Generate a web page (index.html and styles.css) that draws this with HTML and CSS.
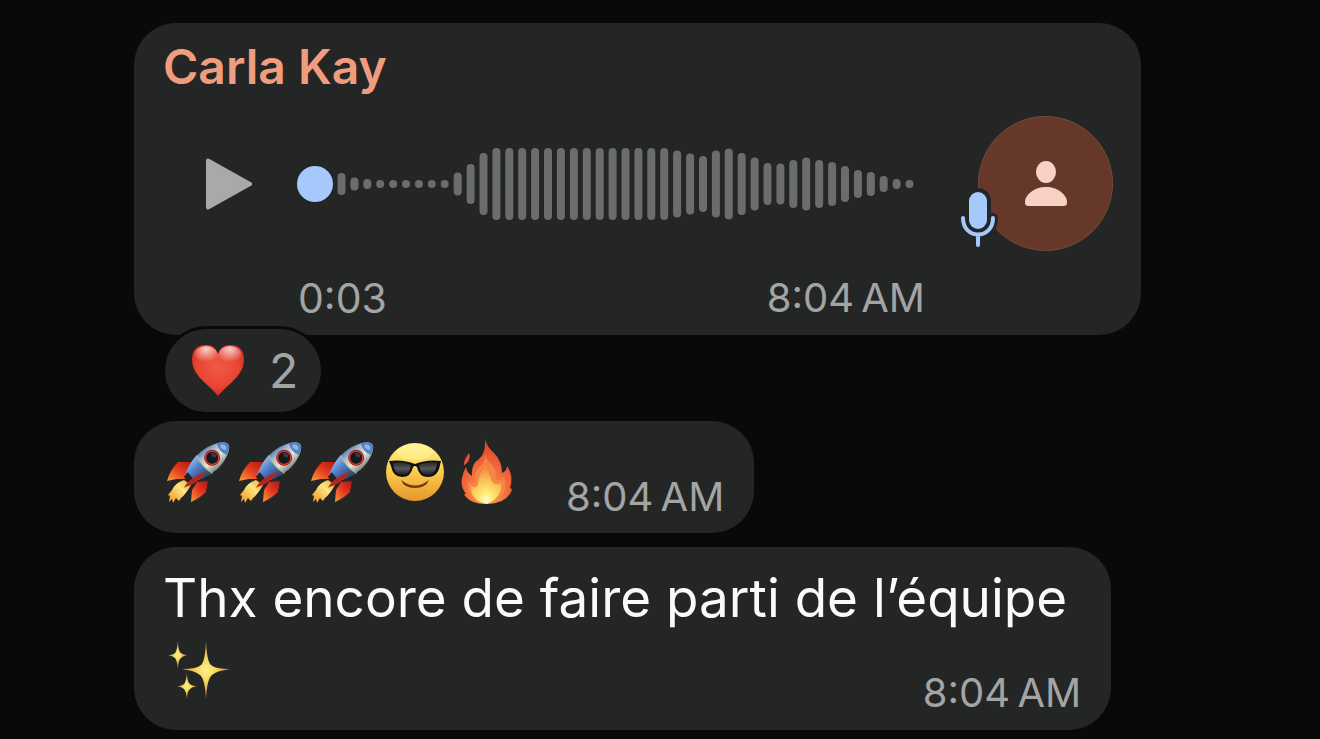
FILE: index.html
```html
<!DOCTYPE html>
<html lang="fr">
<head>
<meta charset="utf-8">
<meta name="viewport" content="width=device-width, initial-scale=1">
<title>Carla Kay</title>
<link rel="stylesheet" href="styles.css">
</head>
<body>
<svg class="defs" aria-hidden="true">
  <defs>
    <linearGradient id="hull" x1="0" y1="0" x2="1" y2="0">
      <stop offset="0" stop-color="#5f86b8"/><stop offset=".25" stop-color="#a9b9c9"/><stop offset=".6" stop-color="#e4e6e4"/><stop offset="1" stop-color="#858985"/>
    </linearGradient>
    <linearGradient id="skirt" x1="0" y1="0" x2="1" y2="0">
      <stop offset="0" stop-color="#8db5ea"/><stop offset=".4" stop-color="#4e7fc8"/><stop offset="1" stop-color="#243e68"/>
    </linearGradient>
    <linearGradient id="fin" x1="1" y1="0" x2="0" y2="1">
      <stop offset="0" stop-color="#a5180f"/><stop offset=".5" stop-color="#e63a22"/><stop offset="1" stop-color="#f5a03a"/>
    </linearGradient>
    <linearGradient id="exhaust" x1="1" y1="0" x2="0" y2="1">
      <stop offset="0" stop-color="#e8a42c"/><stop offset=".4" stop-color="#ffe680"/><stop offset="1" stop-color="#e9901c"/>
    </linearGradient>
    <linearGradient id="face" x1="0" y1="0" x2="0" y2="1">
      <stop offset="0" stop-color="#fff184"/><stop offset=".5" stop-color="#fbcc4b"/><stop offset="1" stop-color="#e6962b"/>
    </linearGradient>
    <linearGradient id="lens" x1="0" y1="0" x2="0" y2="1">
      <stop offset="0" stop-color="#26282a"/><stop offset=".5" stop-color="#55585a"/><stop offset="1" stop-color="#1b1b1b"/>
    </linearGradient>
    <radialGradient id="blaze" cx=".5" cy=".86" r=".8">
      <stop offset="0" stop-color="#fbb04a"/><stop offset=".45" stop-color="#f4743c"/><stop offset="1" stop-color="#e1432f"/>
    </radialGradient>
    <radialGradient id="core" cx=".5" cy=".9" r=".8">
      <stop offset="0" stop-color="#fffde0"/><stop offset=".25" stop-color="#ffec78"/><stop offset=".65" stop-color="#fcc257"/><stop offset="1" stop-color="#f59246"/>
    </radialGradient>
    <radialGradient id="gold">
      <stop offset="0" stop-color="#fff08a"/><stop offset=".35" stop-color="#f8da5c"/><stop offset="1" stop-color="#c98a4d"/>
    </radialGradient>
    <radialGradient id="love" cx=".5" cy=".42" r=".62">
      <stop offset="0" stop-color="#ee5a46"/><stop offset=".65" stop-color="#ea4533"/><stop offset="1" stop-color="#c9261c"/>
    </radialGradient>
    <radialGradient id="shine" cx=".5" cy=".15" r=".65">
      <stop offset="0" stop-color="#fff" stop-opacity=".75"/><stop offset="1" stop-color="#fff" stop-opacity="0"/>
    </radialGradient>
    <symbol id="rocket" viewBox="0 0 64 64">
      <path d="M29 22L12 22Q4 30 1 41L11 39 21 39z" fill="url(#fin)"/>
      <path d="M42 41L40 52Q34 58 25 62L26 50 31 42z" fill="url(#fin)"/>
      <path d="M18 40L25 45Q20 54 15 58L13 61 10 58 7 63 6 59 3 62 4 56 2 55 6 50Q9 43 18 40z" fill="url(#exhaust)"/>
      <g transform="translate(62 4) rotate(49)">
        <path d="M0 0Q4 0 8 8 12 17 12 26 11 40 5 52L-5 52Q-12 40-12 26-12 17-8 8-4 0 0 0z" fill="url(#hull)"/>
        <path d="M-12 31Q0 35 12 31 10 42 5 52L-5 52Q-11 42-12 31z" fill="url(#skirt)"/>
        <path d="M0 0Q4 0 8 8 0 12-8 8-4 0 0 0z" fill="#5284c4"/>
        <path d="M-4 5Q0 1 3 5 3 7-3 8z" fill="#8fb8e2"/>
        <path d="M-12 31Q0 35 12 31" fill="none" stroke="#c4bd72"/>
        <path d="M-5 49H5L4 55H-4z" fill="#1f2427"/>
        <path d="M6 35Q11 47 4 62 0 50 6 35z" fill="#b8261b"/>
        <circle cy="21" r="8" fill="#a91d19"/><circle cy="21" r="7" fill="#d8493d"/><circle cy="21" r="6" fill="#15191d"/>
        <ellipse cx="-1" cy="18" rx="3" ry="2" fill="#353b40"/>
      </g>
    </symbol>
    <symbol id="cool" viewBox="0 0 60 60">
      <circle cx="30" cy="30" r="29" fill="url(#face)"/>
      <ellipse cx="30" cy="10" rx="18" ry="8" fill="#fff8a8" opacity=".5"/>
      <path d="M16 38Q30 49 44 38 41 46 30 46 19 46 16 38z" fill="#6a3b12"/>
      <path d="M4 19Q18 17 30 22 42 17 56 19L55 23Q53 35 43 35 34 35 32 25 30 23 28 25 26 35 17 35 8 35 6 24z" fill="#111"/>
      <path d="M8 21Q18 19 26 23 25 33 17 33 9 33 8 21zM34 23Q43 19 52 21 51 33 43 33 35 33 34 23z" fill="url(#lens)"/>
    </symbol>
    <symbol id="fire" viewBox="0 0 52 66">
      <path d="M24 0Q26 8 33 14 41 22 41 34 46 32 46 27 53 37 49 49 52 50 50 53 44 65 26 65 8 65 3 55L5 55Q-1 47 1 39 2 33 5 28 6 34 11 37 10 25 18 20 25 14 24 0z" fill="url(#blaze)"/>
      <path d="M8 14Q10 19 6 24 2 27 3 27 2 22 8 14z" fill="#ea5036"/>
      <path d="M24 14Q25 22 32 27 36 32 35 41 42 42 43 37 47 53 37 60 26 67 14 60 5 54 7 42 10 45 14 44 13 34 18 28 25 23 24 14z" fill="#f58a48" opacity=".8"/>
      <path d="M25 27Q29 37 31 43 35 47 40 44 42 58 26 65 9 62 10 47 15 50 17 46 17 36 25 27z" fill="url(#core)"/>
    </symbol>
    <symbol id="sparkles" viewBox="0 0 62 62">
      <path d="M38 0Q39 21 43 24 47 28 62 28 48 30 44 34 39 38 38 58 37 38 32 34 28 30 14 28 29 28 33 24 37 21 38 0z" fill="url(#gold)"/>
      <path d="M10 0Q10 10 13 12 15 14 19 14 15 15 13 17 10 19 10 28 9 19 7 17 5 15 0 14 5 14 7 12 9 10 10 0z" fill="url(#gold)"/>
      <path d="M19 32Q19 41 22 43 24 45 29 45 24 46 22 48 19 50 19 58 18 50 16 48 14 46 9 45 14 45 16 43 18 41 19 32z" fill="url(#gold)"/>
    </symbol>
    <symbol id="heart" viewBox="0 0 52 52">
      <path d="M26 51Q22 46 12 37 0 26 0 15 0 0 14 0 23 0 26 9 29 0 38 0 52 0 52 15 52 26 40 37 30 46 26 51z" fill="url(#love)"/>
      <ellipse cx="14" cy="11" rx="12" ry="10" fill="url(#shine)"/><ellipse cx="38" cy="11" rx="12" ry="10" fill="url(#shine)"/>
    </symbol>
  </defs>
</svg>

<main class="chat">
  <article class="bubble voice">
    <h1 class="sender">Carla Kay</h1>
    <div class="player">
      <button class="play" type="button" aria-label="Play">
        <svg width="46" height="52" viewBox="0 0 46 52"><path d="M2 2.500L44 26 2 49.500z" fill="#a9a9a9" stroke="#a9a9a9" stroke-width="4" stroke-linejoin="round"/></svg>
      </button>
      <div class="track">
        <svg class="wave" viewBox="0 0 618 72" aria-hidden="true">
          <path class="bars" d="M44.500 29V43M57.400 33.500V38.500M70.300 35V37M83.200 36V36.100M96.100 36V36.100M109 36V36.100M121.900 36V36.100M134.800 36V36.100M147.700 36V36.100M160.700 28.500V43.500M173.600 20V52M186.500 9V63M199.400 4V68M212.300 4V68M225.200 4V68M238.100 4V68M251 4V68M263.900 4V68M276.900 4V68M289.800 4V68M302.700 4V68M315.600 4V68M328.500 4V68M341.400 4V68M354.300 4V68M367.200 4V68M380.100 6.500V65.500M393.100 9.500V62.500M406 12V60M418.900 6.500V65.500M431.800 4.500V67.500M444.700 9V63M457.600 13.500V58.500M470.500 19V53M483.400 19.500V52.500M496.300 16V56M509.200 13.500V58.500M522.200 16V56M535.100 18V54M548 22V50M560.900 26V46M573.800 28V44M586.700 32V40M599.600 35V37M612.500 36V36.100"/>
        </svg>
        <input class="seek" type="range" min="0" max="3" value="0" step="0.1" aria-label="Position">
      </div>
      <div class="avatar">
        <svg class="person" width="42" height="46" viewBox="0 0 42 46"><ellipse cx="21" cy="11" rx="10" ry="11"/><path d="M0 41C0 34 9 26 21 26S42 34 42 41C42 44 41 45 38 45H4C1 45 0 44 0 41z"/></svg>
        <svg class="mic" width="42" height="66" viewBox="0 0 42 66">
          <g fill="none" stroke-linecap="round"><path d="M21 14V29" stroke="#242626" stroke-width="26"/><path d="M6 31C6 53 36 53 36 31M21 48V58" stroke="#242626" stroke-width="10"/><path d="M6 31C6 53 36 53 36 31M21 48V58" stroke="#a5c9fb" stroke-width="4"/><path d="M21 14V33" stroke="#242626" stroke-width="23"/><path d="M21 14V33" stroke="#a5c9fb" stroke-width="18"/></g>
        </svg>
      </div>
    </div>
    <div class="meta"><span>0:03</span><time>8:04&#8239;AM</time></div>
  </article>
  <button class="reaction" type="button" aria-label="2 réactions">
    <svg width="52" height="52"><use href="#heart"/></svg><span>2</span>
  </button>
  <article class="bubble emojis">
    <div class="emoji-row" role="img" aria-label="Trois fusées, lunettes de soleil, feu">
      <svg width="64" height="64"><use href="#rocket"/></svg>
      <svg width="64" height="64"><use href="#rocket"/></svg>
      <svg width="64" height="64"><use href="#rocket"/></svg>
      <svg class="smiley" width="60" height="60"><use href="#cool"/></svg>
      <svg class="flame" width="52" height="66"><use href="#fire"/></svg>
    </div>
    <time>8:04&#8239;AM</time>
  </article>
  <article class="bubble message">
    <p class="text">Thx encore de faire parti de l’équipe</p>
    <div class="closing">
      <svg width="62" height="62" role="img" aria-label="Étincelles"><use href="#sparkles"/></svg>
      <time>8:04&#8239;AM</time>
    </div>
  </article>
</main>
</body>
</html>
```
FILE: styles.css
```css
* { box-sizing: border-box; }
body {
  margin: 0;
  background: #090909;
  color: #a3a4a4;
  font-family: Inter, "Liberation Sans", sans-serif;
  font-size: 41px;
  line-height: 48px;
}
button { border: 0; padding: 0; background: none; color: inherit; font: inherit; cursor: pointer; }
svg { display: block; flex: none; }
.defs { position: absolute; width: 0; height: 0; }
.chat {
  display: flex;
  flex-direction: column;
  align-items: flex-start;
  padding: 23px 179px 7px 134px;
}
.bubble { background: #242626; border-radius: 42px; padding: 0 30px; }
time { white-space: nowrap; font-size: 40px; }

.voice { align-self: stretch; padding: 14px 28px 13px 29px; }
.sender { margin: 0; color: #f09d7f; font-size: 48px; font-weight: 600; line-height: 60px; }
.player { display: flex; align-items: center; margin-top: 19px; }
.play { margin-left: 43px; }
.track { display: grid; align-items: center; flex: 1; margin: 0 63px 0 45px; }
.wave, .seek { grid-area: 1 / 1; width: 100%; }
.bars { fill: none; stroke: #6b6d6c; stroke-width: 8; stroke-linecap: round; }
.seek { margin: 0; height: 36px; appearance: none; background: none; }
.seek::-webkit-slider-thumb { appearance: none; width: 36px; height: 36px; border-radius: 50%; background: #a5c9fb; }
.avatar {
  position: relative;
  display: grid;
  place-items: center;
  width: 135px;
  height: 135px;
  border: 1px solid #74493c;
  border-radius: 50%;
  background: #65382a;
}
.person { fill: #f8d2c5; }
.mic { position: absolute; left: -22px; bottom: -3px; }
.meta { display: flex; justify-content: space-between; margin: 23px 188px 0 135px; }

.reaction {
  display: flex;
  align-items: center;
  gap: 25px;
  margin: -9px 0 0 28px;
  padding: 0 23px 0 27px;
  height: 89px;
  border: 3px solid #090909;
  border-radius: 45px;
  background: #242626;
  font-size: 48px;
}

.emojis { display: flex; align-items: flex-end; gap: 53px; margin-top: 6px; padding: 18px 30px 12px 32px; }
.emoji-row { display: flex; align-items: center; gap: 8px; padding-bottom: 16px; }
.smiley { margin-left: 3px; }
.flame { margin-left: 8px; }

.message { margin-top: 14px; padding: 17px 30px 13px 29px; }
.text { margin: 0; padding-right: 14px; color: #fafafa; font-size: 53px; line-height: 68px; }
.closing { display: flex; justify-content: space-between; align-items: flex-end; padding: 9px 0 0 5px; }
.closing svg { margin-bottom: 14px; }
```
